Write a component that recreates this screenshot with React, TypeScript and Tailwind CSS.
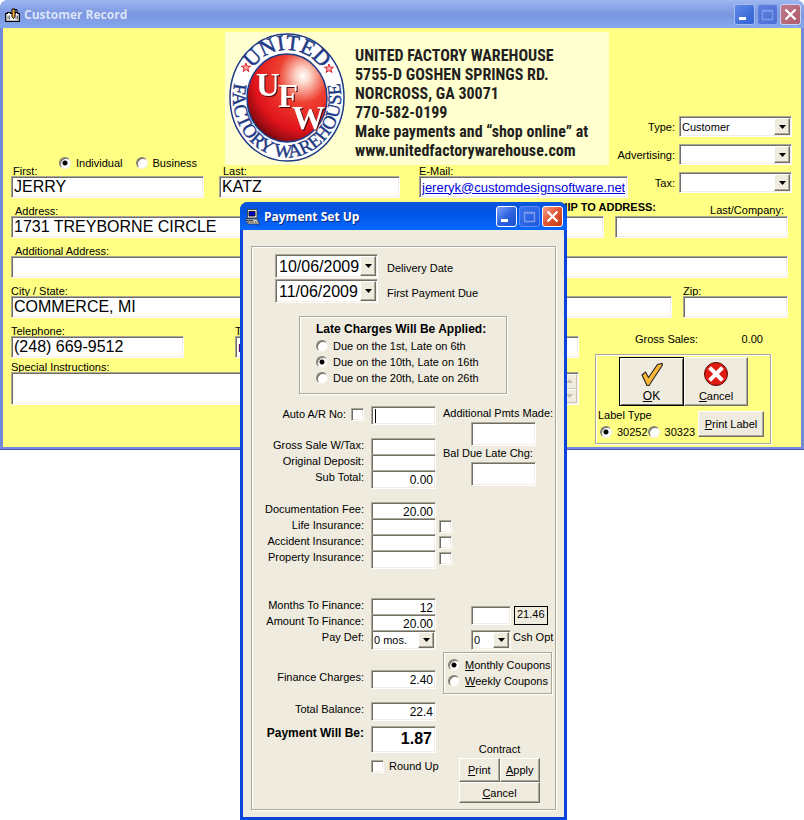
import type { InputHTMLAttributes, ReactNode } from "react";

const sunken =
  "rounded-none border border-[#aca899] border-r-white border-b-white bg-white shadow-[inset_1px_1px_#716f64,inset_-1px_-1px_#f5ece6] outline-none";
const etched = "border border-[#aca899] shadow-[1px_1px_#fff,inset_1px_1px_#fff]";
const raised =
  "border border-white border-r-[#716f64] border-b-[#716f64] bg-[#efebde] shadow-[inset_-1px_-1px_#aca899]";

function Radio(props: InputHTMLAttributes<HTMLInputElement>) {
  return (
    <input
      type="radio"
      {...props}
      className="size-3 shrink-0 appearance-none rounded-full border border-[#848070] border-r-[#f5efe6] border-b-[#f5efe6] bg-white shadow-[inset_1px_1px_#716f64] checked:bg-[radial-gradient(circle,#000_2px,#fff_3px)]"
    />
  );
}

function Check(props: InputHTMLAttributes<HTMLInputElement>) {
  return <input type="checkbox" {...props} className={`size-[13px] shrink-0 appearance-none ${sunken}`} />;
}

function DropArrow() {
  return (
    <span
      className={`pointer-events-none absolute top-0.5 right-0.5 bottom-0.5 flex w-4 items-center justify-center ${raised}`}
    >
      <svg viewBox="0 0 7 4" className="h-1 w-[7px]">
        <path d="M0 0H7L3.5 4Z" fill="#000" />
      </svg>
    </span>
  );
}

function Select({ id, options, className }: { id: string; options: string[]; className: string }) {
  return (
    <span className={`relative block ${className}`}>
      <select id={id} className={`block size-full appearance-none pl-0.5 ${sunken}`}>
        {options.map((o) => (
          <option key={o}>{o}</option>
        ))}
      </select>
      <DropArrow />
    </span>
  );
}

function TitleButtons({ active }: { active: boolean }) {
  const blue = active
    ? "border-white bg-linear-to-br from-[#7da2f5] via-[#2f63e0] to-[#1d4fd0]"
    : "border-[#a5bcf0] bg-linear-to-br from-[#5f8ae8] to-[#2f5fd4]";
  const dim = active
    ? "border-[#5c8cf5] bg-linear-to-br from-[#3a73ee] to-[#1f58dd]"
    : "border-[#8aa5ea] bg-linear-to-br from-[#6080de] to-[#4a6fd6]";
  const red = active
    ? "border-white bg-linear-to-br from-[#f0a08a] via-[#e0532e] to-[#c63c14]"
    : "border-[#cdd3ee] bg-linear-to-br from-[#c07a8c] to-[#ac5c6a]";
  const box = "flex size-[21px] items-center justify-center rounded-[3px] border";
  return (
    <div className="flex gap-0.5">
      <button aria-label="Minimize" className={`${box} ${blue}`}>
        <svg viewBox="0 0 19 19" className="size-[19px]">
          <rect x="4" y="12" width="7" height="3" fill="#fff" />
        </svg>
      </button>
      <button aria-label="Maximize" disabled className={`${box} ${dim}`}>
        <svg viewBox="0 0 19 19" className="size-[19px]">
          <path d="M4.500 5.500H14.500V14.500H4.500ZM4 6H15" fill="none" stroke="#7f9cec" strokeWidth="1.300" />
        </svg>
      </button>
      <button aria-label="Close" className={`${box} ${red}`}>
        <svg viewBox="0 0 19 19" className="size-[19px]">
          <path d="M4.500 4.500L14.500 14.500M14.500 4.500L4.500 14.500" stroke="#fff" strokeWidth="2.300" />
        </svg>
      </button>
    </div>
  );
}

function Field({
  id,
  label,
  value,
  className,
  labelClass = "pl-0.5",
  inputClass = "text-base",
}: {
  id: string;
  label: string;
  value?: string;
  className: string;
  labelClass?: string;
  inputClass?: string;
}) {
  return (
    <div className={`flex flex-col ${className}`}>
      <label htmlFor={id} className={`h-[11px] leading-[13px] whitespace-nowrap ${labelClass}`}>
        {label}
      </label>
      <input id={id} defaultValue={value} className={`h-[22px] w-full px-0.5 ${sunken} ${inputClass}`} />
    </div>
  );
}

function Logo() {
  return (
    <svg viewBox="0 0 120 131" className="h-[131px] w-[120px] shrink-0">
      <defs>
        <radialGradient id="ball" cx="0.7" cy="0.25" r="0.88">
          <stop offset="0" stopColor="#fff" />
          <stop offset="0.1" stopColor="#fcd5c8" />
          <stop offset="0.35" stopColor="#ee4030" />
          <stop offset="0.7" stopColor="#e0131b" />
          <stop offset="0.86" stopColor="#9a0c12" />
          <stop offset="1" stopColor="#3c0406" />
        </radialGradient>
        <path id="arcTop" d="M16 66A44 48 0 0 1 104 66" />
        <path id="arcBottom" d="M11 40A54 60 0 1 0 109 40" />
      </defs>
      <ellipse cx="60" cy="65.500" rx="57" ry="63.500" fill="#fff" stroke="#1f3b85" strokeWidth="1.500" />
      <ellipse cx="60" cy="66" rx="40" ry="44" fill="url(#ball)" stroke="#1f3b85" strokeWidth="1.500" />
      <g className="font-['Liberation_Serif',serif]" fill="#1f3b85" textAnchor="middle">
        <text fontSize="22">
          <textPath href="#arcTop" startOffset="50%" stroke="#1f3b85" strokeWidth="0.500">
            UNITED
          </textPath>
        </text>
        <text fontSize="19">
          <textPath href="#arcBottom" startOffset="50%" stroke="#1f3b85" strokeWidth="0.400">
            FACTORY WAREHOUSE
          </textPath>
        </text>
      </g>
      <g fill="#f7a8a0" stroke="#e0202a" strokeWidth="1">
        <path id="star" d="M19 31L20.200 34.200H23.500L20.900 36.200L21.900 39.500L19 37.500L16.100 39.500L17.100 36.200L14.500 34.200H17.800Z" />
        <use href="#star" x="83" y="1" />
      </g>
      <g
        className="font-['Liberation_Serif',serif] [filter:drop-shadow(1px_1px_0_#4a0508)]"
        fill="#fff"
        fontWeight="bold"
      >
        <text x="29" y="64" fontSize="33">
          U
        </text>
        <text x="51" y="75" fontSize="33">
          F
        </text>
        <text x="65" y="97" fontSize="33">
          W
        </text>
      </g>
    </svg>
  );
}

function CustomerRecord() {
  return (
    <section className="flex flex-col overflow-hidden rounded-t-lg border-b border-[#4a55b8] bg-[#7389dd]">
      <header className="flex h-7 items-center justify-between bg-linear-to-b from-[#9db8f0] via-[#7b96df] to-[#84a8ee] pr-[3px] pl-[5px]">
        <h1 className="flex items-center gap-1 pt-0.5 font-['Open_Sans',sans-serif] text-[12px] font-bold text-[#dbe4fa]">
          <svg viewBox="0 0 15 15" className="size-[15px]">
            <path d="M.7 5.500H2.500V4.500H5.500V5.500H10V4.500H12.500V5.500H14.300V13.300H.7Z" fill="#fff" stroke="#000" strokeWidth="1.200" />
            <path d="M3 7.500V11.500M4.500 7.500V11.500M11 7.500V11.500M12.500 7.500V11.500" stroke="#444" strokeWidth="0.800" />
            <path d="M7 1H10V8.500L8.500 10.500L7 8.500Z" fill="#f7b23c" stroke="#000" />
            <path d="M10 1.500H12V4" fill="none" stroke="#000" />
          </svg>
          Customer Record
        </h1>
        <TitleButtons active={false} />
      </header>
      <form className="mx-[3px] mb-0.5 flex flex-col bg-[#ffff84] px-2 pb-[3px]">
        <div className="flex">
          <div className="flex w-[617px] shrink-0 flex-col">
            <div className="flex h-[137px] pt-1">
              <div className="flex flex-1 flex-col justify-end pl-12 leading-[12px]">
                <fieldset className="-mb-1 flex gap-[14px]">
                  <label className="flex items-center gap-[5px]">
                    <Radio name="kind" defaultChecked /> Individual
                  </label>
                  <label className="flex items-center gap-1">
                    <Radio name="kind" /> Business
                  </label>
                </fieldset>
              </div>
              <div className="mr-[19px] flex w-96 shrink-0 bg-[#ffffcf] pl-0.5">
                <Logo />
                <p className="pt-[14px] pl-2 font-['Liberation_Sans_Narrow','Roboto_Condensed','Liberation_Sans',sans-serif] text-[16px] leading-[19px] font-bold whitespace-nowrap text-[#231f20]">
                  UNITED FACTORY WAREHOUSE
                  <br />
                  5755-D GOSHEN SPRINGS RD.
                  <br />
                  NORCROSS, GA 30071
                  <br />
                  770-582-0199
                  <br />
                  Make payments and “shop online” at
                  <br />
                  www.unitedfactorywarehouse.com
                </p>
              </div>
            </div>
            <div className="flex">
              <Field id="first" label="First:" value="JERRY" className="w-[193px]" />
              <Field id="last" label="Last:" value="KATZ" className="ml-[15px] w-[181px]" labelClass="pl-1" />
              <Field
                id="email"
                label="E-Mail:"
                value="jereryk@customdesignsoftware.net"
                className="ml-[19px] w-[209px]"
                labelClass=""
                inputClass="text-[13px] text-[#0000e0] underline"
              />
            </div>
          </div>
          <div className="mt-[88px] ml-auto grid grid-cols-[47px_113px] content-start items-center gap-x-1 gap-y-[7px] pr-px">
            <label htmlFor="type" className="justify-self-end">
              Type:
            </label>
            <Select id="type" options={["Customer"]} className="h-[21px] w-full" />
            <label htmlFor="advertising" className="justify-self-end">
              Advertising:
            </label>
            <Select id="advertising" options={[""]} className="h-[21px] w-full" />
            <label htmlFor="tax" className="justify-self-end">
              Tax:
            </label>
            <Select id="tax" options={[""]} className="h-[21px] w-full" />
          </div>
        </div>

        <div className="mt-[7px] mr-[5px] flex">
          <Field id="address" label="Address:" value="1731 TREYBORNE CIRCLE" className="w-96" labelClass="pl-1" />
          <div className="ml-2 flex flex-1 flex-col">
            <div className="flex h-[11px] items-end justify-between">
              <span className="w-[253px] pb-[3px] text-right leading-[12px] font-bold">SHIP TO ADDRESS:</span>
              <label htmlFor="company" className="pr-1 leading-[11px]">
                Last/Company:
              </label>
            </div>
            <div className="flex gap-[11px]">
              <input aria-label="Ship to first name" className={`h-[22px] min-w-0 flex-1 ${sunken}`} />
              <input id="company" className={`h-[22px] w-[173px] ${sunken}`} />
            </div>
          </div>
        </div>

        <div className="mt-[7px] mr-[5px] flex gap-2">
          <Field id="address2" label="Additional Address:" className="w-96" labelClass="pl-1" />
          <Field id="shipAddress" label="" className="flex-1" />
        </div>

        <div className="mt-[7px] mr-[5px] flex">
          <Field id="city" label="City / State:" value="COMMERCE, MI" className="w-96" labelClass="" />
          <Field id="shipCity" label="" className="ml-2 flex-1" />
          <Field id="zip" label="Zip:" className="ml-[11px] w-[105px]" labelClass="" />
        </div>

        <div className="flex">
          <div className="mt-[7px] flex w-[568px] flex-col">
            <div className="flex">
              <Field id="tel" label="Telephone:" value="(248) 669-9512" className="w-[173px]" labelClass="" />
              <Field
                id="tel2"
                label="Telephone:"
                value="n"
                className="ml-[51px] w-[173px]"
                labelClass=""
                inputClass="text-[14px] font-bold text-[#000080]"
              />
              <Field id="tel3" label="" className="ml-5 flex-1" />
            </div>
            <label htmlFor="notes" className="mt-[3px] h-[11px] leading-[13px]">
              Special Instructions:
            </label>
            <div className={`flex h-[33px] p-px ${sunken}`}>
              <textarea id="notes" className="min-w-0 flex-1 resize-none bg-transparent outline-none" />
              <div className="flex w-4 flex-col" aria-hidden="true">
                {["M0 4H7L3.500 0Z", "M0 0H7L3.500 4Z"].map((d) => (
                  <span
                    key={d}
                    className="flex flex-1 items-center justify-center border border-white border-r-[#c9c5b4] border-b-[#c9c5b4] bg-[#efebde]"
                  >
                    <svg viewBox="0 0 7 4" className="h-1 w-[7px]">
                      <path d={d} fill="#c3bfae" />
                    </svg>
                  </span>
                ))}
              </div>
            </div>
          </div>
          <div className="ml-4 w-[176px]">
            <p className="flex justify-between pt-[14px] pr-2 pl-10 leading-[14px]">
              <span>Gross Sales:</span>
              <span>0.00</span>
            </p>
            <div className={`mt-2 flex h-[90px] flex-col pt-0.5 ${etched}`}>
              <div className="flex pl-[23px]">
                <button
                  type="button"
                  className="flex h-[49px] w-[65px] flex-col items-center justify-end border border-black bg-[#efebde] pb-0.5 text-[12px] leading-[14px] shadow-[inset_1px_1px_#fff,inset_-1px_-1px_#716f64]"
                >
                  <svg viewBox="0 0 24 26" className="mb-0.5 h-[26px] w-6">
                    <path
                      d="M2 14L5.500 11L8.500 16.500L17.500 3.500L22 2.500L22.500 4L9 24.500H7Z"
                      fill="#fbb938"
                      stroke="#222"
                      strokeWidth="1.100"
                    />
                  </svg>
                  <span>
                    <u>O</u>K
                  </span>
                </button>
                <button
                  type="button"
                  className={`flex h-[49px] w-16 flex-col items-center justify-end pb-0.5 leading-[14px] ${raised}`}
                >
                  <svg viewBox="0 0 26 26" className="mb-0.5 size-[26px]">
                    <circle cx="13" cy="13" r="11.500" fill="#e01b12" stroke="#5a0a06" />
                    <path d="M8 8L18 18M18 8L8 18" stroke="#fff" strokeWidth="4" strokeLinecap="square" />
                  </svg>
                  <span>
                    <u>C</u>ancel
                  </span>
                </button>
              </div>
              <div className="flex justify-between pr-1.5 pl-0.5">
                <fieldset>
                  <legend className="pt-0.5 leading-[14px]">Label Type</legend>
                  <div className="flex pt-[3px] pl-0.5 leading-[14px]">
                    <label className="flex items-center gap-[5px]">
                      <Radio name="labelType" defaultChecked /> 30252
                    </label>
                    <label className="flex items-center gap-[5px]">
                      <Radio name="labelType" /> 30323
                    </label>
                  </div>
                </fieldset>
                <button type="button" className={`mt-[5px] h-[26px] w-[66px] shrink-0 whitespace-nowrap ${raised}`}>
                  <u>P</u>rint Label
                </button>
              </div>
            </div>
          </div>
        </div>
      </form>
    </section>
  );
}

function Row({ id, label, value, check }: { id: string; label: string; value?: string; check?: boolean }) {
  return (
    <div className="flex h-4">
      <label htmlFor={id} className="w-28 shrink-0 text-right leading-[14px] whitespace-nowrap">
        {label}
      </label>
      <input
        id={id}
        defaultValue={value}
        className={`ml-[7px] h-[19px] w-[65px] shrink-0 px-0.5 text-right text-[12px] ${sunken}`}
      />
      {check && (
        <span className="ml-[3px] pt-0.5 leading-[0]">
          <Check aria-label={`Include ${label}`} />
        </span>
      )}
    </div>
  );
}

function DateRow({ id, label, value }: { id: string; label: string; value: string }) {
  return (
    <div className="flex items-center gap-[9px]">
      <span className="relative block h-6 w-[103px]">
        <input id={id} defaultValue={value} className={`size-full pt-0.5 pl-[3px] text-base ${sunken}`} />
        <DropArrow />
      </span>
      <label htmlFor={id} className="pt-1">
        {label}
      </label>
    </div>
  );
}

function RadioLine({ name, checked, children }: { name: string; checked?: boolean; children: ReactNode }) {
  return (
    <label className="flex h-4 items-center gap-[5px] whitespace-nowrap">
      <Radio name={name} defaultChecked={checked} />
      <span>{children}</span>
    </label>
  );
}

function PaymentSetUp() {
  return (
    <section className="absolute top-[202px] left-[240px] flex w-[327px] flex-col overflow-hidden rounded-t-lg bg-[#0a44dc]">
      <header className="flex h-7 items-center justify-between bg-linear-to-b from-[#0a55dc] from-0% via-[#0054e3] via-40% to-[#0a68ff] px-1">
        <h2 className="flex items-center gap-1 pt-0.5 font-['Open_Sans',sans-serif] text-[12px] font-bold text-white [text-shadow:1px_1px_#0a2a80]">
          <svg viewBox="0 0 16 16" className="size-4">
            <path d="M3.500 .5H13V9H3.500Z" fill="#e8e4dc" stroke="#333" strokeWidth="0.800" />
            <path d="M5 2.500H11V7H5Z" fill="#0000c8" stroke="#000" strokeWidth="0.800" />
            <path d="M1.500 10H13L15.500 15H4Z" fill="#d4d0c8" stroke="#333" strokeWidth="0.800" />
            <path d="M3 11.500H9M4 13H10M11 13H13.500" stroke="#222" strokeDasharray="1.500 .7" />
          </svg>
          Payment Set Up
        </h2>
        <TitleButtons active />
      </header>
      <form className="mx-[3px] mb-[3px] bg-[#efebde] px-2 pt-4 pb-[7px]">
        <div className={`h-[564px] ${etched}`}>
          <div className="flex flex-col gap-px pt-[7px] pl-[23px]">
            <DateRow id="delivery" label="Delivery Date" value="10/06/2009" />
            <DateRow id="firstDue" label="First Payment Due" value="11/06/2009" />
          </div>

          <fieldset className={`mt-[13px] ml-[47px] h-[78px] w-52 pt-1 pl-4 ${etched}`}>
            <p className="h-[17px] text-[12px] leading-[17px] font-bold whitespace-nowrap">
              Late Charges Will Be Applied:
            </p>
            <RadioLine name="late">Due on the 1st, Late on 6th</RadioLine>
            <RadioLine name="late" checked>
              Due on the 10th, Late on 16th
            </RadioLine>
            <RadioLine name="late">Due on the 20th, Late on 26th</RadioLine>
          </fieldset>

          <div className="mt-3 flex">
            <div className="flex w-[191px] shrink-0 flex-col">
              <div className="flex h-[19px]">
                <label htmlFor="autoAr" className="w-[94px] pt-px text-right leading-[14px]">
                  Auto A/R No:
                </label>
                <span className="ml-[5px] pt-0.5 leading-[0]">
                  <Check id="autoAr" />
                </span>
                <span className={`ml-[7px] flex h-[19px] w-[65px] py-0.5 pl-[3px] ${sunken}`}>
                  <span className="h-[14px] w-px bg-black" />
                  <input aria-label="A/R number" className="min-w-0 flex-1 outline-none" />
                </span>
              </div>
              <div className="mt-[13px]">
                <Row id="gross" label="Gross Sale W/Tax:" />
                <Row id="deposit" label="Original Deposit:" />
                <Row id="sub" label="Sub Total:" value="0.00" />
              </div>
              <div className="mt-4">
                <Row id="doc" label="Documentation Fee:" value="20.00" />
                <Row id="life" label="Life Insurance:" check />
                <Row id="accident" label="Accident Insurance:" check />
                <Row id="property" label="Property Insurance:" check />
              </div>
              <div className="mt-8">
                <Row id="months" label="Months To Finance:" value="12" />
                <Row id="amount" label="Amount To Finance:" value="20.00" />
                <div className="flex h-4">
                  <label htmlFor="payDef" className="w-28 text-right leading-[14px]">
                    Pay Def:
                  </label>
                  <Select id="payDef" options={["0 mos."]} className="ml-[7px] h-5 w-[65px] shrink-0" />
                </div>
              </div>
              <div className="mt-6">
                <Row id="charges" label="Finance Charges:" value="2.40" />
              </div>
              <div className="mt-4">
                <Row id="total" label="Total Balance:" value="22.4" />
              </div>
              <div className="mt-2 flex">
                <label htmlFor="payment" className="w-28 text-right text-[12px] leading-[14px] font-bold whitespace-nowrap">
                  Payment Will Be:
                </label>
                <input
                  id="payment"
                  defaultValue="1.87"
                  className={`ml-[7px] h-[27px] w-[65px] shrink-0 px-[3px] pb-0.5 text-right text-base font-bold ${sunken}`}
                />
              </div>
              <label className="mt-[7px] ml-[119px] flex items-center gap-[5px] leading-[13px] whitespace-nowrap">
                <Check /> Round Up
              </label>
            </div>

            <div className="flex w-[108px] shrink-0 flex-col">
              <label htmlFor="additional" className="h-4 leading-[14px] whitespace-nowrap">
                Additional Pmts Made:
              </label>
              <input id="additional" className={`ml-7 h-6 w-[65px] ${sunken}`} />
              <label htmlFor="lateCharge" className="h-4 leading-[14px] whitespace-nowrap">
                Bal Due Late Chg:
              </label>
              <input id="lateCharge" className={`ml-7 h-6 w-[65px] ${sunken}`} />
              <div className="mt-[120px] ml-7 flex gap-[3px]">
                <input aria-label="Cash option amount" className={`h-[19px] w-10 ${sunken}`} />
                <output className="h-[19px] w-[34px] border border-black pl-0.5 leading-[15px]">21.46</output>
              </div>
              <div className="mt-[5px] ml-7 flex gap-0.5">
                <Select id="cash" options={["0"]} className="h-5 w-10 shrink-0" />
                <label htmlFor="cash" className="leading-[14px] whitespace-nowrap">
                  Csh Opt
                </label>
              </div>
              <fieldset className={`mt-0.5 flex h-[42px] flex-col pt-1 pl-1 ${etched}`}>
                <RadioLine name="coupons" checked>
                  <u>M</u>onthly Coupons
                </RadioLine>
                <RadioLine name="coupons">
                  <u>W</u>eekly Coupons
                </RadioLine>
              </fieldset>
              <div className="mt-12 ml-4 grid w-[81px] grid-cols-2">
                <p className="col-span-2 h-4 text-center leading-[14px]">Contract</p>
                <button type="button" className={`h-6 ${raised}`}>
                  <u>P</u>rint
                </button>
                <button type="button" className={`h-6 ${raised}`}>
                  <u>A</u>pply
                </button>
                <button type="button" className={`col-span-2 h-[21px] ${raised}`}>
                  <u>C</u>ancel
                </button>
              </div>
            </div>
          </div>
        </div>
      </form>
    </section>
  );
}

export default function App() {
  return (
    <main className="relative min-h-screen bg-white font-['Liberation_Sans',Arial,sans-serif] text-[11px] leading-[14px] text-black">
      <CustomerRecord />
      <PaymentSetUp />
    </main>
  );
}
